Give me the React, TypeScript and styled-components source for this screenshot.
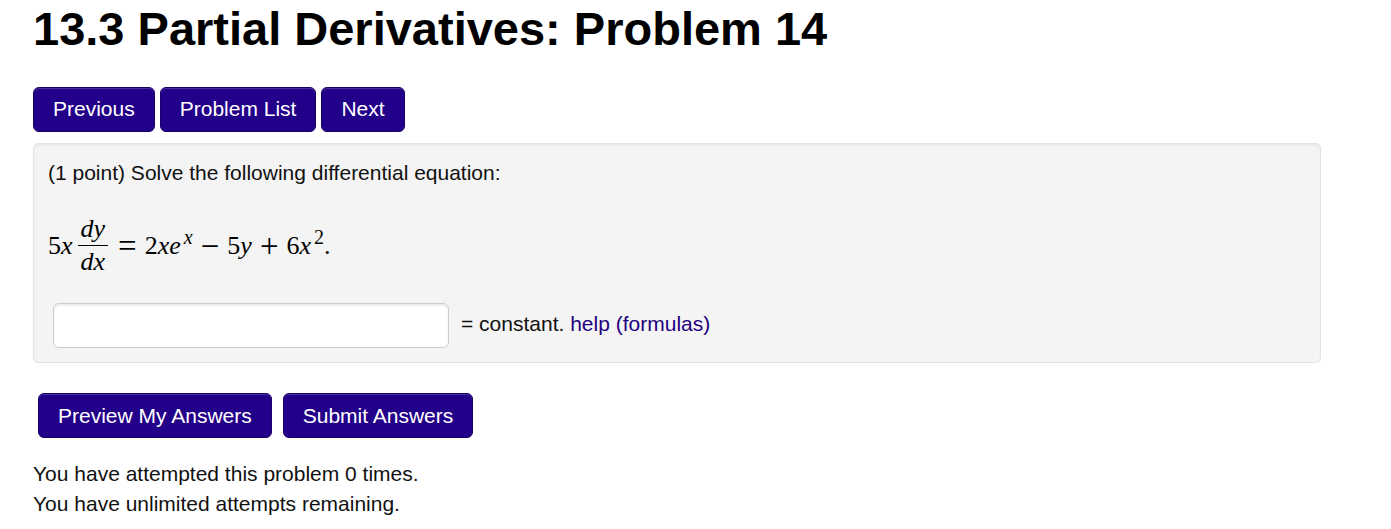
import React from "react";
import styled, { createGlobalStyle, css } from "styled-components";

const GlobalStyle = createGlobalStyle`
  body {
    margin: 0;
    background: #fff;
    color: #111;
    font-family: "Liberation Sans", Arial, sans-serif;
    font-size: 21px;
    line-height: 30px;
  }
`;

const Page = styled.main`
  padding: 0 70px 10px 33px;
`;

const Title = styled.h1`
  margin: 0 0 29px;
  color: #000;
  font-size: 47px;
  line-height: 58px;
`;

const buttonLook = css`
  box-sizing: border-box;
  height: 45px;
  padding: 6px 19px;
  border: 1px solid #1c0069;
  border-radius: 6px;
  background: #230089;
  box-shadow: inset 0 1px 0 rgba(255, 255, 255, 0.18);
  color: #fff;
  font: inherit;
  white-space: nowrap;
  cursor: pointer;
`;

const NavBar = styled.nav`
  display: flex;
  flex-wrap: wrap;
  gap: 5px;
`;

const NavLink = styled.a`
  ${buttonLook}
  text-decoration: none;
`;

const Button = styled.button`
  ${buttonLook}
`;

const Panel = styled.section`
  margin-top: 11px;
  padding: 14px;
  border: 1px solid #e3e3e3;
  border-radius: 5px;
  background: #f4f4f4;
  box-shadow: inset 0 2px 2px rgba(0, 0, 0, 0.05);
`;

const Prompt = styled.p`
  margin: 0;
`;

const Equation = styled.div`
  display: flex;
  align-items: center;
  margin: 25px 0;
  color: #000;
  font-family: "Liberation Serif", "Times New Roman", serif;
  font-size: 26px;
  line-height: 32px;
`;

const Fraction = styled.span`
  display: flex;
  flex-direction: column;
  align-items: center;
  margin: 0 2px 0 5px;
`;

const Numerator = styled.span`
  padding: 0 3px;
  border-bottom: 1px solid #000;
`;

const Denominator = styled.span`
  padding: 0 3px;
`;

const Operator = styled.span`
  padding: 0 8px;
  font-size: 33px;
`;

const Exponent = styled.sup`
  margin-left: 3px;
  font-size: 20px;
  line-height: 0;
`;

const AnswerRow = styled.div`
  display: flex;
  flex-wrap: wrap;
  align-items: center;
  gap: 12px;
  padding-left: 5px;
`;

const AnswerInput = styled.input`
  box-sizing: border-box;
  width: 396px;
  max-width: 100%;
  height: 45px;
  padding: 6px 9px;
  border: 1px solid #ccc;
  border-radius: 6px;
  background: #fff;
  box-shadow: inset 0 2px 2px rgba(0, 0, 0, 0.07);
  font: inherit;
`;

const AnswerText = styled.span`
  padding-bottom: 4px;
`;

const HelpLink = styled.a`
  color: #23007f;
  text-decoration: none;
`;

const Actions = styled.div`
  display: flex;
  flex-wrap: wrap;
  gap: 11px;
  margin: 30px 0 21px 5px;
`;

const Status = styled.p`
  margin: 0;
`;

export default function App() {
  return (
    <Page>
      <GlobalStyle />
      <Title>13.3 Partial Derivatives: Problem 14</Title>
      <NavBar aria-label="Problems">
        <NavLink href="#previous">Previous</NavLink>
        <NavLink href="#list">Problem List</NavLink>
        <NavLink href="#next">Next</NavLink>
      </NavBar>
      <form onSubmit={(event) => event.preventDefault()}>
        <Panel>
          <Prompt>(1 point) Solve the following differential equation:</Prompt>
          <Equation>
            <span>
              5<i>x</i>
            </span>
            <Fraction>
              <Numerator>
                <i>dy</i>
              </Numerator>
              <Denominator>
                <i>dx</i>
              </Denominator>
            </Fraction>
            <Operator>=</Operator>
            <span>
              2<i>xe</i>
              <Exponent>
                <i>x</i>
              </Exponent>
            </span>
            <Operator>−</Operator>
            <span>
              5<i>y</i>
            </span>
            <Operator>+</Operator>
            <span>
              6<i>x</i>
              <Exponent>2</Exponent>.
            </span>
          </Equation>
          <AnswerRow>
            <AnswerInput id="answer" type="text" autoComplete="off" />
            <AnswerText>
              <label htmlFor="answer">= constant.</label>{" "}
              <HelpLink href="#formulas">help (formulas)</HelpLink>
            </AnswerText>
          </AnswerRow>
        </Panel>
        <Actions>
          <Button type="button">Preview My Answers</Button>
          <Button type="submit">Submit Answers</Button>
        </Actions>
      </form>
      <Status>You have attempted this problem 0 times.</Status>
      <Status>You have unlimited attempts remaining.</Status>
    </Page>
  );
}
